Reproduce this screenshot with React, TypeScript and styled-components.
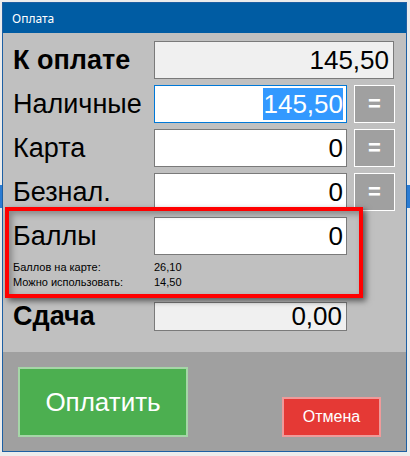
import styled, { createGlobalStyle } from 'styled-components'

const GlobalStyle = createGlobalStyle`
  html, body {
    margin: 0;
    padding: 0;
  }
  body {
    width: 410px;
    height: 456px;
    overflow: hidden;
    font-family: "Liberation Sans", Arial, sans-serif;
    background:
      linear-gradient(to bottom, transparent 185px, #2b7cd3 185px, #2b7cd3 208px, transparent 208px),
      #ececec;
  }
`

const Window = styled.div`
  margin: 2px 0 0 2px;
  width: 403px;
  height: 448px;
  border: 1px solid #1d5fa3;
  display: flex;
  flex-direction: column;
  background: #c0c0c0;
`

const TitleBar = styled.div`
  height: 30px;
  flex-shrink: 0;
  padding-left: 9px;
  display: flex;
  align-items: center;
  background: #005ca3;
  color: #ffffff;
  font-family: "Noto Sans", "Liberation Sans", sans-serif;
  font-size: 12px;
`

const Body = styled.div`
  position: relative;
  height: 319px;
  flex-shrink: 0;
  padding: 8px 0 0 10px;
  box-sizing: border-box;
  display: flex;
  flex-direction: column;
`

const Row = styled.div`
  display: flex;
  align-items: center;
  height: 38px;
  margin-bottom: 6px;
`

const Label = styled.div<{ $bold?: boolean }>`
  width: 141px;
  flex-shrink: 0;
  font-size: 27px;
  font-weight: ${p => (p.$bold ? 700 : 400)};
  color: #000000;
  white-space: nowrap;
`

const Field = styled.div<{ $wide?: boolean; $readonly?: boolean; $focused?: boolean; $h?: number }>`
  width: ${p => (p.$wide ? 240 : 193)}px;
  height: ${p => p.$h ?? 38}px;
  box-sizing: border-box;
  border: 1px solid ${p => (p.$focused ? '#0078d7' : '#7a7a7a')};
  background: ${p => (p.$readonly ? '#f0f0f0' : '#ffffff')};
  display: flex;
  align-items: center;
  justify-content: flex-end;
  padding-right: ${p => (p.$readonly ? 4 : 3)}px;
  font-size: 26px;
  color: #000000;
`

const Selected = styled.span`
  display: inline-block;
  line-height: 32px;
  background: #3399ff;
  color: #ffffff;
`

const EqButton = styled.div`
  width: 41px;
  height: 38px;
  margin-left: 7px;
  box-sizing: border-box;
  border: 1px solid #ffffff;
  background: #a0a0a0;
  color: #ffffff;
  font-size: 22px;
  font-weight: 700;
  display: flex;
  align-items: center;
  justify-content: center;
`

const InfoList = styled.div`
  margin-top: -2px;
  display: flex;
  flex-direction: column;
`

const InfoLine = styled.div`
  display: flex;
  height: 15px;
  align-items: center;
  font-size: 11px;
  color: #000000;
`

const InfoLabel = styled.span`
  width: 141px;
`

const ChangeRow = styled(Row)`
  margin-top: 13px;
  height: 29px;
`

const Highlight = styled.div`
  position: absolute;
  left: 2px;
  top: 174px;
  width: 358px;
  height: 91px;
  box-sizing: border-box;
  border: 4px solid #ff0000;
  box-shadow: 3px 3px 6px rgba(0, 0, 0, 0.55), inset 3px 3px 6px rgba(0, 0, 0, 0.3);
  pointer-events: none;
`

const Footer = styled.div`
  flex: 1;
  background: #a0a0a0;
  display: flex;
  align-items: flex-end;
  justify-content: space-between;
  padding: 0 25px 14px 15px;
`

const ActionButton = styled.div<{ $tone: 'ok' | 'cancel' }>`
  box-sizing: border-box;
  width: ${p => (p.$tone === 'ok' ? 170 : 99)}px;
  height: ${p => (p.$tone === 'ok' ? 70 : 40)}px;
  border: 2px solid ${p => (p.$tone === 'ok' ? '#a5d6a7' : '#ef9a9a')};
  background: ${p => (p.$tone === 'ok' ? '#4caf50' : '#e53935')};
  color: #ffffff;
  font-size: ${p => (p.$tone === 'ok' ? 26 : 16)}px;
  display: flex;
  align-items: center;
  justify-content: center;
`

export default function App() {
  return (
    <>
      <GlobalStyle />
      <Window>
        <TitleBar>Оплата</TitleBar>
        <Body>
          <Row>
            <Label $bold>К оплате</Label>
            <Field $wide $readonly>145,50</Field>
          </Row>
          <Row>
            <Label>Наличные</Label>
            <Field $focused>
              <Selected>145,50</Selected>
            </Field>
            <EqButton>=</EqButton>
          </Row>
          <Row>
            <Label>Карта</Label>
            <Field>0</Field>
            <EqButton>=</EqButton>
          </Row>
          <Row>
            <Label>Безнал.</Label>
            <Field>0</Field>
            <EqButton>=</EqButton>
          </Row>
          <Row>
            <Label>Баллы</Label>
            <Field>0</Field>
          </Row>
          <InfoList>
            <InfoLine>
              <InfoLabel>Баллов на карте:</InfoLabel>
              <span>26,10</span>
            </InfoLine>
            <InfoLine>
              <InfoLabel>Можно использовать:</InfoLabel>
              <span>14,50</span>
            </InfoLine>
          </InfoList>
          <ChangeRow>
            <Label $bold>Сдача</Label>
            <Field $readonly $h={29}>0,00</Field>
          </ChangeRow>
          <Highlight />
        </Body>
        <Footer>
          <ActionButton $tone="ok">Оплатить</ActionButton>
          <ActionButton $tone="cancel">Отмена</ActionButton>
        </Footer>
      </Window>
    </>
  )
}
